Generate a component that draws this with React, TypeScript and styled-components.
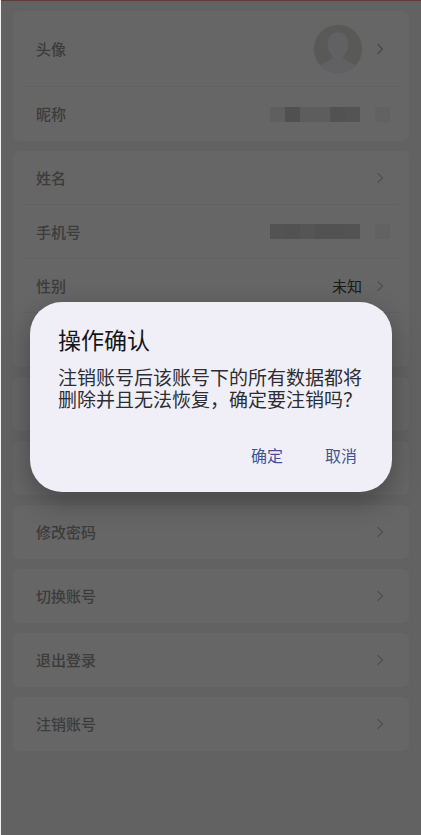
import React from "react";
import styled, { createGlobalStyle } from "styled-components";

const GlobalStyle = createGlobalStyle`
  *, *::before, *::after { box-sizing: border-box; }
  body {
    margin: 0;
    background: #f5f5f5;
    font-family: "Noto Sans CJK SC", "Noto Sans", sans-serif;
  }
  button { font: inherit; border: 0; margin: 0; background: none; cursor: pointer; }
`;

const Shell = styled.div`
  position: relative;
  min-height: 100vh;
  border-left: 1px solid #f2f2f6;
`;

const Page = styled.main`
  display: flex;
  flex-direction: column;
  gap: 10px;
  min-height: 100vh;
  padding: 10px 12px 24px;
  border-top: 1px solid #ff9292;
  background: #f5f5f5;
`;

const Card = styled.section`
  display: flex;
  flex-direction: column;
  padding: 0 10px;
  border-radius: 6px;
  background: #ffffff;
`;

const Row = styled.button<{ $tall?: boolean }>`
  display: flex;
  align-items: center;
  width: 100%;
  height: ${(p) => (p.$tall ? 76 : 54)}px;
  padding: 0 9px 0 13px;
  text-align: left;

  &:not(:last-child) {
    border-bottom: 1px solid #f3f3f3;
  }
`;

const Label = styled.span`
  flex: 1;
  font-size: 15px;
  line-height: 20px;
  font-weight: 500;
  color: #969696;
`;

const Value = styled.span`
  margin-right: 13px;
  font-size: 15px;
  line-height: 20px;
  color: #444444;
`;

const AvatarSlot = styled.span`
  display: flex;
  margin-right: 12px;
`;

const ArrowSlot = styled.span`
  display: flex;
  width: 15px;
`;

const Mosaic = styled.span`
  display: flex;
`;

const Tile = styled.span<{ $tone: string }>`
  width: 15px;
  height: 15px;
  background: ${(p) => p.$tone};
`;

const Scrim = styled.div`
  position: absolute;
  inset: 0;
  display: flex;
  align-items: center;
  justify-content: center;
  padding: 0 29px 41px;
  background: rgba(0, 0, 0, 0.6);
`;

const Dialog = styled.div`
  display: flex;
  flex-direction: column;
  width: 100%;
  max-width: 480px;
  padding: 23px 28px 19px;
  border-radius: 32px;
  background: #f0eff7;
  box-shadow: 0 10px 28px rgba(0, 0, 0, 0.3);
`;

const Title = styled.h2`
  margin: 0 0 13px;
  font-size: 23px;
  line-height: 28px;
  font-weight: 400;
  color: #14161a;
`;

const Message = styled.p`
  margin: 0;
  font-size: 19px;
  line-height: 22px;
  color: #2c2e34;
`;

const Actions = styled.div`
  display: flex;
  justify-content: flex-end;
  gap: 18px;
  margin-top: 27px;
  margin-right: -5px;
`;

const Action = styled.button`
  padding: 6px 12px;
  font-size: 16px;
  line-height: 24px;
  font-weight: 400;
  color: #42548f;
`;

const Arrow = ({ strong }: { strong?: boolean }) => (
  <ArrowSlot>
    <svg width="10" height="14" viewBox="0 0 10 14" fill="none" aria-hidden="true">
      <path
        d="M3 2.500L7.500 7L3 11.500"
        stroke={strong ? "#b4b4b4" : "#cacaca"}
        strokeWidth="1.4"
        strokeLinecap="round"
        strokeLinejoin="round"
      />
    </svg>
  </ArrowSlot>
);

const Avatar = () => (
  <AvatarSlot>
    <svg width="50" height="50" viewBox="0 0 50 50" role="img" aria-label="头像">
      <defs>
        <clipPath id="avatar-disc">
          <circle cx="25" cy="25" r="24" />
        </clipPath>
      </defs>
      <circle cx="25" cy="25" r="24.5" fill="#f2f2ef" />
      <g clipPath="url(#avatar-disc)">
        <rect width="50" height="50" fill="#dfdfdc" />
        <path
          d="M25 8.500C18.500 8.500 14.800 13.200 14.800 19.500C14.800 25 17 29.500 19.300 32C20.400 33.400 19.800 34.800 18 35.700L5 42.500V50H45V42.500L32 35.700C30.200 34.800 29.600 33.400 30.700 32C33 29.500 35.200 25 35.200 19.500C35.200 13.200 31.500 8.500 25 8.500Z"
          fill="#f3f3f8"
        />
      </g>
    </svg>
  </AvatarSlot>
);

const nicknameTiles = ["#eeeeee", "#c8c8c8", "#e8e8e8", "#e8e8e8", "#cdcdcd", "#d3d3d3", "transparent", "#f6f6f6"];
const phoneTiles = ["#cfcfcf", "#cccccc", "#d5d5d5", "#cecece", "#cccccc", "#d0d0d0", "transparent", "#f6f6f6"];

const MaskedValue = ({ tiles }: { tiles: string[] }) => (
  <Mosaic aria-hidden="true">
    {tiles.map((tone, i) => (
      <Tile key={i} $tone={tone} />
    ))}
  </Mosaic>
);

const accountActions = ["修改密码", "切换账号", "退出登录", "注销账号"];

export default function App() {
  return (
    <>
      <GlobalStyle />
      <Shell>
        <Page>
          <Card>
            <Row type="button" $tall>
              <Label>头像</Label>
              <Avatar />
              <Arrow strong />
            </Row>
            <Row type="button">
              <Label>昵称</Label>
              <MaskedValue tiles={nicknameTiles} />
            </Row>
          </Card>
          <Card>
            <Row type="button">
              <Label>姓名</Label>
              <Arrow />
            </Row>
            <Row type="button">
              <Label>手机号</Label>
              <MaskedValue tiles={phoneTiles} />
            </Row>
            <Row type="button">
              <Label>性别</Label>
              <Value>未知</Value>
              <Arrow />
            </Row>
            <Row as="div" />
          </Card>
          <Card>
            <Row as="div" />
          </Card>
          <Card>
            <Row as="div" />
          </Card>
          {accountActions.map((name) => (
            <Card key={name}>
              <Row type="button">
                <Label>{name}</Label>
                <Arrow />
              </Row>
            </Card>
          ))}
        </Page>
        <Scrim>
          <Dialog role="alertdialog" aria-modal="true" aria-labelledby="confirm-title" aria-describedby="confirm-text">
            <Title id="confirm-title">操作确认</Title>
            <Message id="confirm-text">注销账号后该账号下的所有数据都将删除并且无法恢复，确定要注销吗？</Message>
            <Actions>
              <Action type="button">确定</Action>
              <Action type="button">取消</Action>
            </Actions>
          </Dialog>
        </Scrim>
      </Shell>
    </>
  );
}
